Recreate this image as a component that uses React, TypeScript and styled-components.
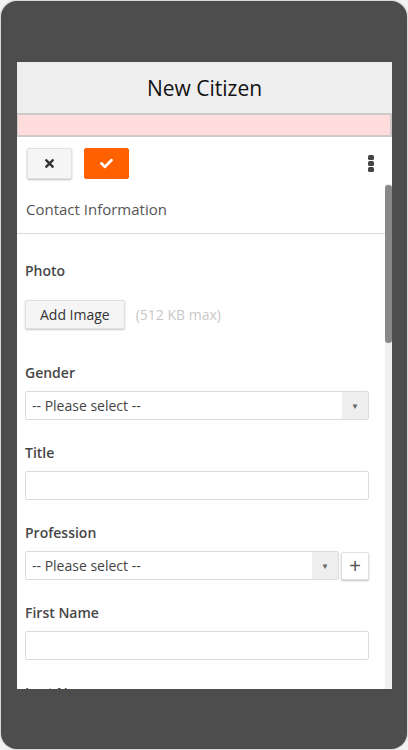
import { createGlobalStyle, styled } from 'styled-components';
import { FaCheck, FaTimes } from 'react-icons/fa';

const GlobalStyle = createGlobalStyle`
  html, body {
    margin: 0;
    padding: 0;
    background: #f2f2f2;
  }
  body {
    font-family: 'Open Sans', 'Noto Sans', sans-serif;
  }
  * {
    box-sizing: border-box;
  }
`;

const Phone = styled.div`
  margin: 1px;
  width: 406px;
  height: 748px;
  padding: 61px 15px 60px 16px;
  background: #4d4d4d;
  border-radius: 16px;
  box-shadow: 0 0 2px rgba(0, 0, 0, 0.4);
`;

const Screen = styled.div`
  display: flex;
  flex-direction: column;
  width: 375px;
  height: 627px;
  background: #fff;
  overflow: hidden;
`;

const Header = styled.div`
  display: flex;
  align-items: center;
  justify-content: center;
  height: 51px;
  flex-shrink: 0;
  background: #eeeeee;
  font-size: 21px;
  color: #111;
`;

const Alert = styled.div`
  height: 24px;
  flex-shrink: 0;
  background: #ffdddd;
  border: 2px solid #cfcaca;
  border-left-width: 1px;
`;

const Toolbar = styled.div`
  display: flex;
  align-items: center;
  gap: 12px;
  height: 47px;
  flex-shrink: 0;
  padding: 6px 18px 0 10px;
`;

const ToolButton = styled.button<{ $primary?: boolean }>`
  display: flex;
  align-items: center;
  justify-content: center;
  width: 45px;
  height: 31px;
  padding: 0;
  border-radius: 2px;
  cursor: pointer;
  border: 1px solid ${({ $primary }) => ($primary ? '#ff6000' : '#e2e2e2')};
  background: ${({ $primary }) => ($primary ? '#ff6000' : '#f5f5f5')};
  color: ${({ $primary }) => ($primary ? '#fff' : '#333')};
  box-shadow: ${({ $primary }) => ($primary ? 'none' : '0 1px 2px rgba(0, 0, 0, 0.25)')};
  font-size: 13px;
`;

const MenuButton = styled.button`
  margin-left: auto;
  display: flex;
  align-items: center;
  background: none;
  border: none;
  padding: 0;
  color: #444;
`;

const ScrollArea = styled.div`
  flex: 1;
  min-height: 0;
  display: flex;
`;

const Content = styled.div`
  flex: 1;
  min-width: 0;
  overflow: hidden;
`;

const ScrollTrack = styled.div`
  width: 7px;
  flex-shrink: 0;
  padding-top: 1px;
  background: #f0f0f0;
`;

const ScrollThumb = styled.div`
  height: 158px;
  border-radius: 3px;
  background: #888;
`;

const SectionTitle = styled.div`
  padding: 15px 9px 14px;
  font-size: 15px;
  line-height: 20px;
  color: #555;
  border-bottom: 1px solid #dcdcdc;
`;

const Form = styled.div`
  display: flex;
  flex-direction: column;
  gap: 23px;
  padding: 27px 16px 40px 8px;
`;

const Field = styled.div<{ $gap?: number; $spaced?: boolean }>`
  display: flex;
  flex-direction: column;
  gap: ${({ $gap }) => $gap ?? 8}px;
  margin-bottom: ${({ $spaced }) => ($spaced ? 11 : 0)}px;
`;

const Label = styled.label`
  font-size: 14px;
  line-height: 20px;
  font-weight: 600;
  color: #474747;
`;

const Row = styled.div<{ $gap?: number }>`
  display: flex;
  align-items: center;
  gap: ${({ $gap }) => $gap ?? 11}px;
`;

const AddImage = styled.button`
  height: 29px;
  padding: 0 14px;
  background: #f5f5f5;
  border: 1px solid #e0e0e0;
  border-radius: 2px;
  box-shadow: 0 1px 2px rgba(0, 0, 0, 0.22);
  font-family: inherit;
  font-size: 14px;
  color: #333;
`;

const Hint = styled.span`
  font-size: 14px;
  color: #c8c8c8;
`;

const TextInput = styled.div`
  height: 29px;
  flex-shrink: 0;
  border: 1px solid #dcdcdc;
  border-radius: 2px;
  background: #fff;
`;

const SelectBox = styled.div`
  flex: 1 0 auto;
  display: flex;
  align-items: stretch;
  height: 29px;
  border: 1px solid #dcdcdc;
  border-radius: 2px;
  background: #fff;
  font-size: 14px;
  color: #444;
`;

const SelectText = styled.span`
  flex: 1;
  display: flex;
  align-items: center;
  padding-left: 6px;
`;

const SelectArrow = styled.span`
  display: flex;
  align-items: center;
  justify-content: center;
  width: 26px;
  background: #eeeeee;
  color: #666;
  font-size: 8px;
`;

const AddButton = styled.button`
  display: flex;
  align-items: center;
  justify-content: center;
  width: 28px;
  height: 28px;
  flex-shrink: 0;
  padding: 0;
  margin-left: 2px;
  background: #fff;
  border: 1px solid #e0e0e0;
  border-radius: 2px;
  box-shadow: 0 1px 2px rgba(0, 0, 0, 0.25);
  color: #555;
  font-size: 20px;
  line-height: 1;
`;

const Select = ({ text = '-- Please select --' }: { text?: string }) => (
  <SelectBox>
    <SelectText>{text}</SelectText>
    <SelectArrow>▼</SelectArrow>
  </SelectBox>
);

const textFields = ['First Name', 'Last Name'];

const App = () => {
  return (
    <>
      <GlobalStyle />
      <Phone>
        <Screen>
          <Header>New Citizen</Header>
          <Alert />
          <Toolbar>
            <ToolButton>
              <FaTimes />
            </ToolButton>
            <ToolButton $primary>
              <FaCheck />
            </ToolButton>
            <MenuButton>
              <svg width='6' height='17' viewBox='0 0 6 17'>
                <rect x='0' y='0' width='6' height='5' rx='1.5' fill='currentColor' />
                <rect x='0' y='6' width='6' height='5' rx='1.5' fill='currentColor' />
                <rect x='0' y='12' width='6' height='5' rx='1.5' fill='currentColor' />
              </svg>
            </MenuButton>
          </Toolbar>
          <ScrollArea>
            <Content>
              <SectionTitle>Contact Information</SectionTitle>
              <Form>
                <Field $gap={19} $spaced>
                  <Label>Photo</Label>
                  <Row>
                    <AddImage>Add Image</AddImage>
                    <Hint>(512 KB max)</Hint>
                  </Row>
                </Field>
                <Field>
                  <Label>Gender</Label>
                  <Select />
                </Field>
                <Field>
                  <Label>Title</Label>
                  <TextInput />
                </Field>
                <Field>
                  <Label>Profession</Label>
                  <Row $gap={0}>
                    <Select />
                    <AddButton>+</AddButton>
                  </Row>
                </Field>
                {textFields.map((name) => (
                  <Field key={name}>
                    <Label>{name}</Label>
                    <TextInput />
                  </Field>
                ))}
              </Form>
            </Content>
            <ScrollTrack>
              <ScrollThumb />
            </ScrollTrack>
          </ScrollArea>
        </Screen>
      </Phone>
    </>
  );
};

export default App;
